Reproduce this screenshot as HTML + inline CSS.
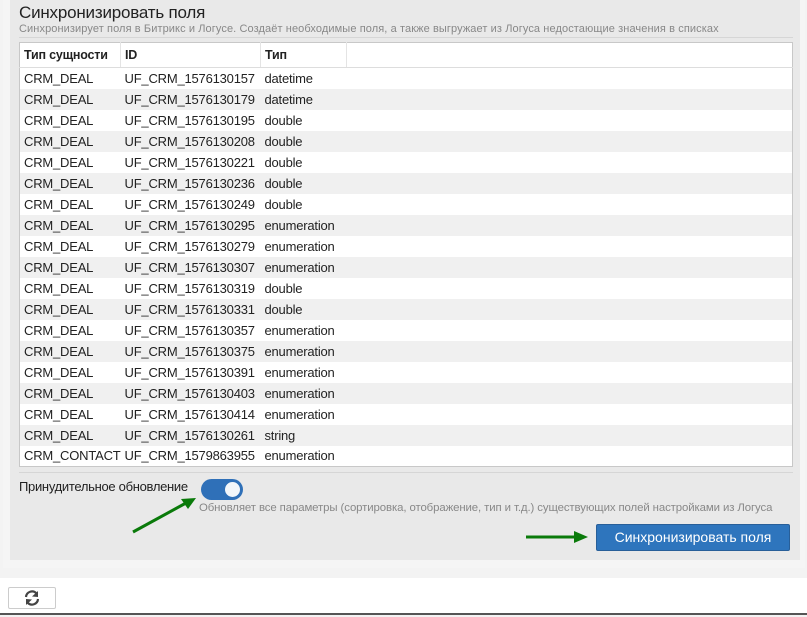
<!DOCTYPE html>
<html><head><meta charset="utf-8"><style>
*{box-sizing:border-box;margin:0;padding:0}
body{width:807px;height:617px;background:#f3f3f3;font-family:"Liberation Sans",sans-serif;position:relative;overflow:hidden;color:#222}
.outer{position:absolute;left:3px;top:0;width:802px;height:568px;background:#f5f5f5}
.panel{position:absolute;left:10px;top:0;width:790px;height:560px;background:#e9e9e9}
h1{position:absolute;left:19px;top:3px;font-size:17px;font-weight:normal;color:#222;letter-spacing:-0.2px}
.sub{position:absolute;left:19px;top:23px;font-size:11px;color:#888;letter-spacing:0.1px}
.sep{position:absolute;left:19px;top:37px;width:774px;height:1px;background:#d6d6d6}
table{position:absolute;left:19px;top:42px;width:774px;border-collapse:collapse;border:1px solid #c8c8c8;font-size:13px;background:#fff;table-layout:fixed}
td,th{height:21px;padding:0 4px;text-align:left;white-space:nowrap;letter-spacing:-0.2px;overflow:visible}
th{height:25px;font-weight:bold;font-size:12.5px;border-right:1px solid #e4e4e4;border-bottom:1px solid #ddd}
tbody tr:nth-child(odd) td{background:#fff}
tbody tr:nth-child(even) td{background:#f0f0f0}
.sep2{position:absolute;left:19px;top:472px;width:774px;height:1px;background:#d6d6d6}
.lbl{position:absolute;left:19px;top:479px;font-size:13px;letter-spacing:-0.3px}
.tog{position:absolute;left:201px;top:479px;width:42px;height:21px;border-radius:11px;background:#2f70b8}
.tog:after{content:"";position:absolute;right:3px;top:3px;width:15px;height:15px;border-radius:50%;background:#f2f6fa}
.hint{position:absolute;left:199px;top:502px;font-size:11.4px;color:#888;letter-spacing:-0.1px}
.btn{position:absolute;left:596px;top:524px;width:194px;height:27px;background:#2e75bd;border:1px solid #285f99;border-radius:2px;color:#fff;font-size:14px;text-align:center;line-height:25px}
.foot{position:absolute;left:0;top:578px;width:807px;height:37px;background:#fff;border-bottom:2px solid #555}
.rb{position:absolute;left:8px;top:9px;width:48px;height:22px;border:1px solid #ccc;border-radius:2px;background:#fff}
</style></head><body>
<div class="outer"></div>
<div class="panel"></div>
<h1>Синхронизировать поля</h1>
<div class="sub">Синхронизирует поля в Битрикс и Логусе. Создаёт необходимые поля, а также выгружает из Логуса недостающие значения в списках</div>
<div class="sep"></div>
<table>
<colgroup><col style="width:101px"><col style="width:140px"><col style="width:86px"><col></colgroup>
<thead><tr><th>Тип сущности</th><th>ID</th><th>Тип</th><th style="border-right:none"></th></tr></thead>
<tbody>
<tr><td>CRM_DEAL</td><td>UF_CRM_1576130157</td><td>datetime</td><td></td></tr>
<tr><td>CRM_DEAL</td><td>UF_CRM_1576130179</td><td>datetime</td><td></td></tr>
<tr><td>CRM_DEAL</td><td>UF_CRM_1576130195</td><td>double</td><td></td></tr>
<tr><td>CRM_DEAL</td><td>UF_CRM_1576130208</td><td>double</td><td></td></tr>
<tr><td>CRM_DEAL</td><td>UF_CRM_1576130221</td><td>double</td><td></td></tr>
<tr><td>CRM_DEAL</td><td>UF_CRM_1576130236</td><td>double</td><td></td></tr>
<tr><td>CRM_DEAL</td><td>UF_CRM_1576130249</td><td>double</td><td></td></tr>
<tr><td>CRM_DEAL</td><td>UF_CRM_1576130295</td><td>enumeration</td><td></td></tr>
<tr><td>CRM_DEAL</td><td>UF_CRM_1576130279</td><td>enumeration</td><td></td></tr>
<tr><td>CRM_DEAL</td><td>UF_CRM_1576130307</td><td>enumeration</td><td></td></tr>
<tr><td>CRM_DEAL</td><td>UF_CRM_1576130319</td><td>double</td><td></td></tr>
<tr><td>CRM_DEAL</td><td>UF_CRM_1576130331</td><td>double</td><td></td></tr>
<tr><td>CRM_DEAL</td><td>UF_CRM_1576130357</td><td>enumeration</td><td></td></tr>
<tr><td>CRM_DEAL</td><td>UF_CRM_1576130375</td><td>enumeration</td><td></td></tr>
<tr><td>CRM_DEAL</td><td>UF_CRM_1576130391</td><td>enumeration</td><td></td></tr>
<tr><td>CRM_DEAL</td><td>UF_CRM_1576130403</td><td>enumeration</td><td></td></tr>
<tr><td>CRM_DEAL</td><td>UF_CRM_1576130414</td><td>enumeration</td><td></td></tr>
<tr><td>CRM_DEAL</td><td>UF_CRM_1576130261</td><td>string</td><td></td></tr>
<tr><td>CRM_CONTACT</td><td>UF_CRM_1579863955</td><td>enumeration</td><td></td></tr>
</tbody></table>
<div class="sep2"></div>
<div class="lbl">Принудительное обновление</div>
<div class="tog"></div>
<div class="hint">Обновляет все параметры (сортировка, отображение, тип и т.д.) существующих полей настройками из Логуса</div>
<svg style="position:absolute;left:0;top:0" width="807" height="617">
<line x1="133" y1="532" x2="186" y2="503" stroke="#0a7a0a" stroke-width="3"/>
<polygon points="196,498 181,499 188,509" fill="#0a7a0a"/>
<line x1="526" y1="537" x2="575" y2="537" stroke="#0a7a0a" stroke-width="3"/>
<polygon points="588,537 574,531 574,543" fill="#0a7a0a"/>
</svg>
<div class="btn">Синхронизировать поля</div>
<div class="foot"><div class="rb"><svg width="46" height="20" viewBox="0 0 46 20"><path d="M17 9a6 6 0 0 1 10.5-3.5M29 11a6 6 0 0 1-10.5 3.5" fill="none" stroke="#444" stroke-width="2.2"/><polygon points="29,3 29,9 23,8.5" fill="#444"/><polygon points="17,17 17,11 23,11.5" fill="#444"/></svg></div></div>
</body></html>
